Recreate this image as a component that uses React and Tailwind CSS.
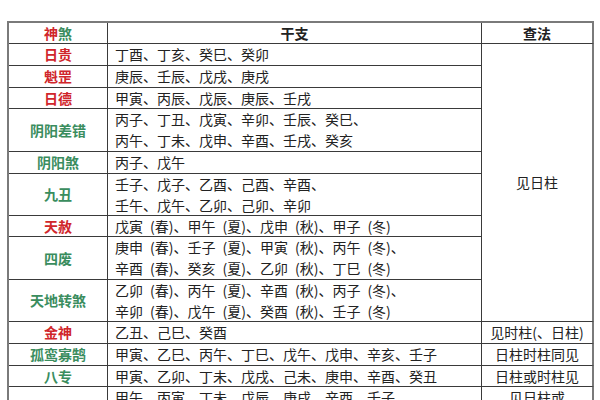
import React from "react";

const RED = "text-[#d0262b]";
const GREEN = "text-[#3a8d5e]";
const S = "\u2002";

const rows = [
  { name: "日贵", c: RED, lines: ["丁酉、丁亥、癸巳、癸卯"], h: 22 },
  { name: "魁罡", c: RED, lines: ["庚辰、壬辰、戊戌、庚戌"], h: 22 },
  { name: "日德", c: RED, lines: ["甲寅、丙辰、戊辰、庚辰、壬戌"], h: 21 },
  { name: "阴阳差错", c: GREEN, lines: ["丙子、丁丑、戊寅、辛卯、壬辰、癸巳、", "丙午、丁未、戊申、辛酉、壬戌、癸亥"], h: 43 },
  { name: "阴阳煞", c: GREEN, lines: ["丙子、戊午"], h: 22 },
  { name: "九丑", c: GREEN, lines: ["壬子、戊子、乙酉、己酉、辛酉、", "壬午、戊午、乙卯、己卯、辛卯"], h: 42 },
  { name: "天赦", c: RED, lines: [`戊寅${S}(春)、甲午${S}(夏)、戊申${S}(秋)、甲子${S}(冬)`], h: 21 },
  { name: "四废", c: GREEN, lines: [`庚申${S}(春)、壬子${S}(夏)、甲寅${S}(秋)、丙午${S}(冬)、`, `辛酉${S}(春)、癸亥${S}(夏)、乙卯${S}(秋)、丁巳${S}(冬)`], h: 43 },
  { name: "天地转煞", c: GREEN, lines: [`乙卯${S}(春)、丙午${S}(夏)、辛酉${S}(秋)、丙子${S}(冬)、`, `辛卯${S}(春)、戊午${S}(夏)、癸酉${S}(秋)、壬子${S}(冬)`], h: 42 },
];

const rows2 = [
  { name: "金神", c: RED, lines: ["乙丑、己巳、癸酉"], h: 22, last: ["见时柱(、日柱)"] },
  { name: "孤鸾寡鹄", c: GREEN, lines: ["甲寅、乙巳、丙午、丁巳、戊午、戊申、辛亥、壬子"], h: 22, last: ["日柱时柱同见"] },
  { name: "八专", c: GREEN, lines: ["甲寅、乙卯、丁未、戊戌、己未、庚申、辛酉、癸丑"], h: 21, last: ["日柱或时柱见"] },
  { name: "十灵", c: GREEN, lines: ["甲午、丙寅、丁未、戊辰、庚戌、辛酉、壬子、", "癸未、乙亥、庚寅"], h: 43, last: ["见日柱或", "时柱"] },
];

const cell = "border-r border-b border-[#3a3a3a]";
const lastCell = "border-b border-[#3a3a3a] border-r-2 border-r-[#7a7a7a]";

function Name({ r }) {
  return (
    <div className={`${cell} flex items-center justify-center font-bold ${r.c}`} style={{ height: r.h }}>
      {r.name}
    </div>
  );
}

function Content({ r }) {
  return (
    <div className={`${cell} flex flex-col justify-center pl-[7px] text-[#222] leading-[21px] whitespace-nowrap overflow-hidden`} style={{ height: r.h }}>
      {r.lines.map((l, i) => (
        <div key={i}>{l}</div>
      ))}
    </div>
  );
}

export default function App() {
  const topH = rows.reduce((s, r) => s + r.h, 0);
  return (
    <div className="w-[600px] h-[400px] overflow-hidden bg-white pt-[21px] pl-[7px] text-[14px]" style={{ fontFamily: '"Noto Sans CJK SC", "Noto Sans", sans-serif' }}>
      <div className="w-[587px] border-l-2 border-t-2 border-[#7a7a7a] grid grid-cols-[99px_374px_112px]">
        <div className={`${cell} h-[21px] flex items-center justify-center font-bold leading-none`}>
          <span className="text-[#d0262b]">神</span>
          <span className="text-[#3a8d5e]">煞</span>
        </div>
        <div className={`${cell} h-[21px] flex items-center justify-center font-bold text-[#222] leading-none`}>干支</div>
        <div className={`${lastCell} h-[21px] flex items-center justify-center font-bold text-[#222] leading-none`}>查法</div>

        <div className="col-span-2 grid grid-cols-[99px_374px]">
          {rows.map((r) => (
            <React.Fragment key={r.name}>
              <Name r={r} />
              <Content r={r} />
            </React.Fragment>
          ))}
        </div>
        <div className={`${lastCell} flex items-center justify-center text-[#222]`} style={{ height: topH }}>
          见日柱
        </div>

        {rows2.map((r) => (
          <React.Fragment key={r.name}>
            <Name r={r} />
            <Content r={r} />
            <div className={`${lastCell} flex flex-col items-center justify-center text-[#222] leading-[21px] whitespace-nowrap`} style={{ height: r.h }}>
              {r.last.map((l, i) => (
                <div key={i}>{l}</div>
              ))}
            </div>
          </React.Fragment>
        ))}
      </div>
    </div>
  );
}
